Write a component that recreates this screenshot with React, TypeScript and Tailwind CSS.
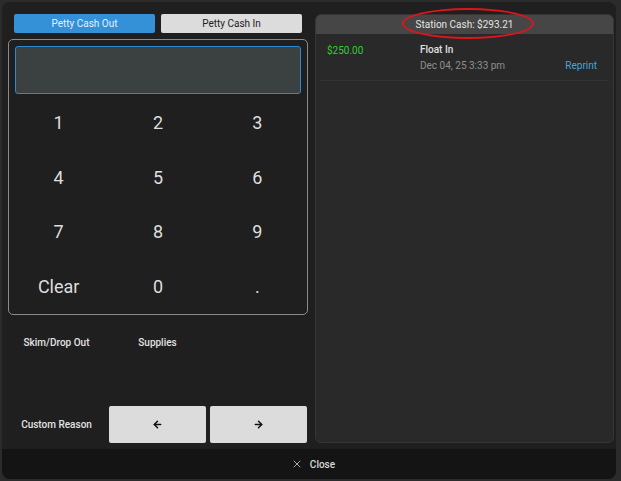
import { ArrowLeft, ArrowRight, X } from "lucide-react";

const keys = ["1", "2", "3", "4", "5", "6", "7", "8", "9", "Clear", "0", "."];

export default function App() {
  return (
    <div
      className="w-[621px] h-[481px] bg-[#2b2b2b] pl-[2px] pt-[2px] pr-[5px] pb-[2px] overflow-hidden"
      style={{ fontFamily: "Roboto, 'Noto Sans', sans-serif" }}
    >
      <div className="h-full bg-[#1f1f1f] rounded-[8px] flex flex-col overflow-hidden">
        <div className="flex-1 flex gap-[7px] pl-[6px] pr-[2px] pt-[12px] pb-[6px]">
          {/* left column */}
          <div className="w-[300px] flex flex-col">
            <div className="flex gap-[6px] px-[6px]">
              <button className="flex-1 h-[19px] bg-[#3491d8] rounded-[2px] text-[10px] text-[#e6f0fa]">
                Petty Cash Out
              </button>
              <button className="flex-1 h-[19px] bg-[#dcdcdc] rounded-[2px] text-[10px] text-[#222]">
                Petty Cash In
              </button>
            </div>

            <div className="mt-[6px] h-[276px] border border-[#8a8a8a] rounded-[5px] px-[6px] pt-[6px] flex flex-col">
              <div className="h-[48px] bg-[#3b4141] border border-[#2b8ad2] rounded-[3px]" />
              <div className="flex-1 grid grid-cols-3 grid-rows-4 -mx-[6px] pt-[1px]">
                {keys.map((k) => (
                  <div
                    key={k}
                    className="flex items-center justify-center text-[18px] text-[#dedede]"
                  >
                    {k}
                  </div>
                ))}
              </div>
            </div>

            <div className="mt-[9px] grid grid-cols-[97px_97px_97px] grid-rows-[37px_37px_37px] gap-[4px]">
              <div className="flex items-center justify-center text-[10px] font-medium text-[#e2e2e2]">
                Skim/Drop Out
              </div>
              <div className="flex items-center justify-center text-[10px] font-medium text-[#e2e2e2]">
                Supplies
              </div>
              <div />
              <div />
              <div />
              <div />
              <div className="flex items-center justify-center text-[10px] font-medium text-[#e2e2e2]">
                Custom Reason
              </div>
              <button className="bg-[#dcdcdc] rounded-[2px] flex items-center justify-center">
                <ArrowLeft size={11} strokeWidth={3.2} color="#111" />
              </button>
              <button className="bg-[#dcdcdc] rounded-[2px] flex items-center justify-center">
                <ArrowRight size={11} strokeWidth={3.2} color="#111" />
              </button>
            </div>
          </div>

          {/* right panel */}
          <div className="flex-1 bg-[#292929] border border-[#353535] rounded-[6px] flex flex-col relative">
            <div className="h-[19px] bg-[#464646] rounded-t-[5px] flex items-center justify-center text-[10px] text-[#e4e4e4]">
              Station Cash: $293.21
            </div>
            <div className="absolute left-[86px] top-[-7px] w-[132px] h-[31px] border-[2px] border-[#e0141c] rounded-[50%] pointer-events-none" />
            <div className="mx-[4px] border-b border-[#333] h-[47px] flex pt-[9px]">
              <div className="w-[100px] pl-[7px] text-[10px] text-[#2ed12e]">$250.00</div>
              <div className="flex-1 flex flex-col">
                <div className="text-[10px] font-medium text-[#e0e0e0] leading-[14px]">Float In</div>
                <div className="flex justify-between text-[10px] leading-[17px]">
                  <span className="text-[#8e8e8e]">Dec 04, 25 3:33 pm</span>
                  <span className="text-[#46a6d6] pr-[12px]">Reprint</span>
                </div>
              </div>
            </div>
          </div>
        </div>

        <div className="h-[30px] bg-[#141414] flex items-center justify-center gap-[7px] pl-[8px] text-[10px] font-medium text-[#d8d8d8]">
          <X size={12} strokeWidth={1.5} color="#d8d8d8" />
          <span>Close</span>
        </div>
      </div>
    </div>
  );
}
